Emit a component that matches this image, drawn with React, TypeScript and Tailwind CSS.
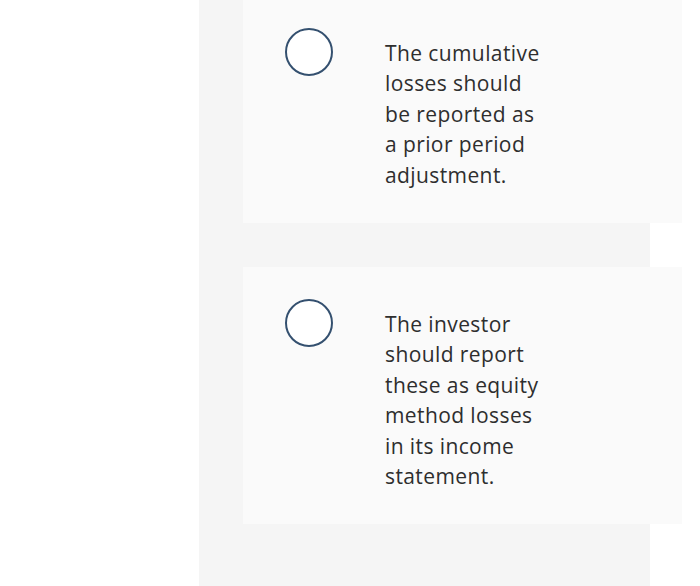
import React from "react";

const options = [
  ["The cumulative", "losses should", "be reported as", "a prior period", "adjustment."],
  ["The investor", "should report", "these as equity", "method losses", "in its income", "statement."],
];

function Radio() {
  return (
    <div className="w-[48px] h-[48px] rounded-full border-2 border-[#34506f] bg-white shrink-0" />
  );
}

export default function App() {
  return (
    <div className="flex w-[700px] h-[586px] overflow-hidden bg-white" style={{ fontFamily: '"Open Sans", "Liberation Sans", sans-serif' }}>
      <div className="w-[199px] shrink-0" />
      <div className="w-[451px] shrink-0 bg-[#f5f5f5] h-[590px] flex flex-col gap-[44px] -mt-[4px]">
        {options.map((lines, i) => (
          <div key={i} className="w-[439px] ml-[44px] bg-[#fafafa] flex pl-[42px] pt-[32px] pb-[33px]">
            <Radio />
            <div className="ml-[52px] pt-[10px] text-[21px] leading-[30.4px] tracking-[0.4px] text-[#2e2e2e]">
              {lines.map((l) => (
                <span key={l} className="block whitespace-nowrap">{l}</span>
              ))}
            </div>
          </div>
        ))}
      </div>
    </div>
  );
}
